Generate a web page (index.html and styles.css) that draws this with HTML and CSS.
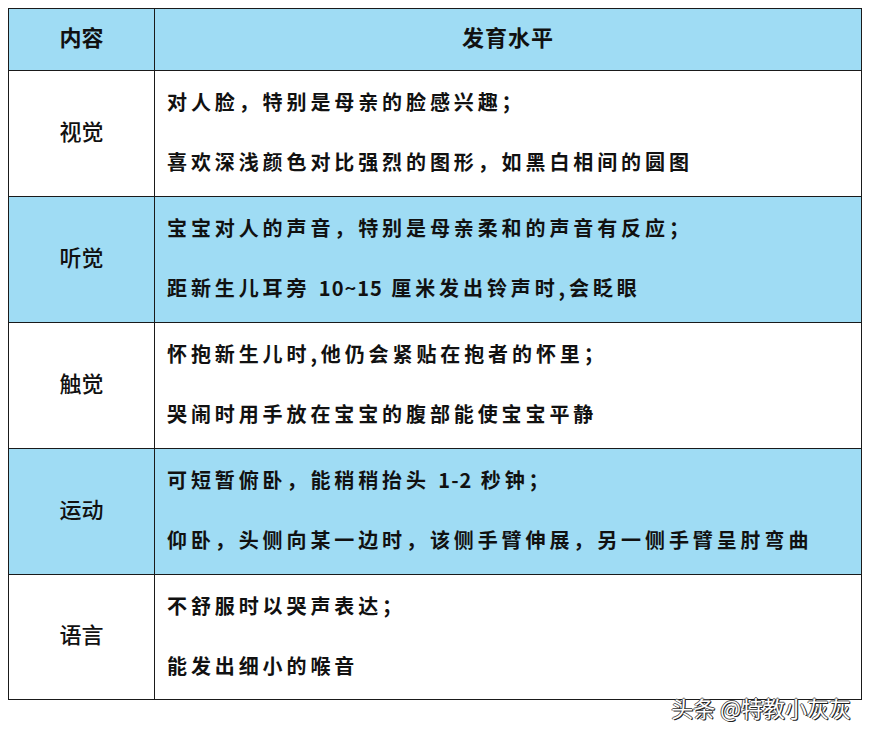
FILE: index.html
```html
<!DOCTYPE html>
<html lang="zh">
<head>
<meta charset="utf-8">
<link rel="stylesheet" href="styles.css">
</head>
<body>
<div class="page">
  <table class="dev">
    <tr class="head blue">
      <th class="c1">内容</th>
      <th class="c2">发育水平</th>
    </tr>
    <tr>
      <td class="c1">视觉</td>
      <td class="c2"><p>对人脸，特别是母亲的脸感兴趣；</p><p>喜欢深浅颜色对比强烈的图形，如黑白相间的圆图</p></td>
    </tr>
    <tr class="blue">
      <td class="c1">听觉</td>
      <td class="c2"><p>宝宝对人的声音，特别是母亲柔和的声音有反应；</p><p>距新生儿耳旁 <span class="num">10~15</span> 厘米发出铃声时,会眨眼</p></td>
    </tr>
    <tr>
      <td class="c1">触觉</td>
      <td class="c2"><p>怀抱新生儿时,他仍会紧贴在抱者的怀里；</p><p>哭闹时用手放在宝宝的腹部能使宝宝平静</p></td>
    </tr>
    <tr class="blue">
      <td class="c1">运动</td>
      <td class="c2"><p>可短暂俯卧，能稍稍抬头 <span class="num">1-2</span> 秒钟；</p><p>仰卧，头侧向某一边时，该侧手臂伸展，另一侧手臂呈肘弯曲</p></td>
    </tr>
    <tr class="last">
      <td class="c1">语言</td>
      <td class="c2"><p>不舒服时以哭声表达；</p><p>能发出细小的喉音</p></td>
    </tr>
  </table>
  <div class="mark">头条 @特教小灰灰</div>
</div>
</body>
</html>
```

FILE: styles.css
```css
html, body {
  margin: 0;
  padding: 0;
  background: #ffffff;
}
.page {
  position: relative;
  width: 869px;
  height: 737px;
  padding: 8px 0 0 8px;
  box-sizing: border-box;
}
.dev {
  border-collapse: collapse;
  width: 854px;
  table-layout: fixed;
  font-family: "Noto Sans CJK SC", sans-serif;
  color: #111;
}
.dev th, .dev td {
  border: 1px solid #1a1a1a;
  padding: 0;
  vertical-align: middle;
}
.dev tr { height: 126px; }
.dev tr.head { height: 62px; }
.dev tr.last { height: 125px; }
.blue { background: #9fdcf4; }
.c1 {
  width: 145px;
  text-align: center;
  font-size: 22px;
  font-weight: 500;
}
td.c1 { padding-bottom: 8px; }
th.c1, th.c2 { padding-bottom: 8px; }
.head .c2 { text-align: center; font-size: 22px; font-weight: 700; letter-spacing: 1px; }
.head .c1 { font-weight: 700; }
td.c2 {
  vertical-align: top;
  padding: 14px 0 0 12px;
  font-size: 20px;
  font-weight: 700;
  letter-spacing: 3.9px;
}
td.c2 p {
  margin: 0;
  line-height: 34px;
}
td.c2 p + p { margin-top: 26px; }
.num { letter-spacing: 1px; font-size: 20px; }
.mark {
  position: absolute;
  right: 18px;
  top: 691px;
  font-family: "Noto Sans CJK SC", sans-serif;
  font-size: 22px;
  color: #ffffff;
  text-shadow: 1px 1px 0 #222, -1px 0 0 #555, 0 -1px 0 #555, 1px 0 0 #333;
}
```
